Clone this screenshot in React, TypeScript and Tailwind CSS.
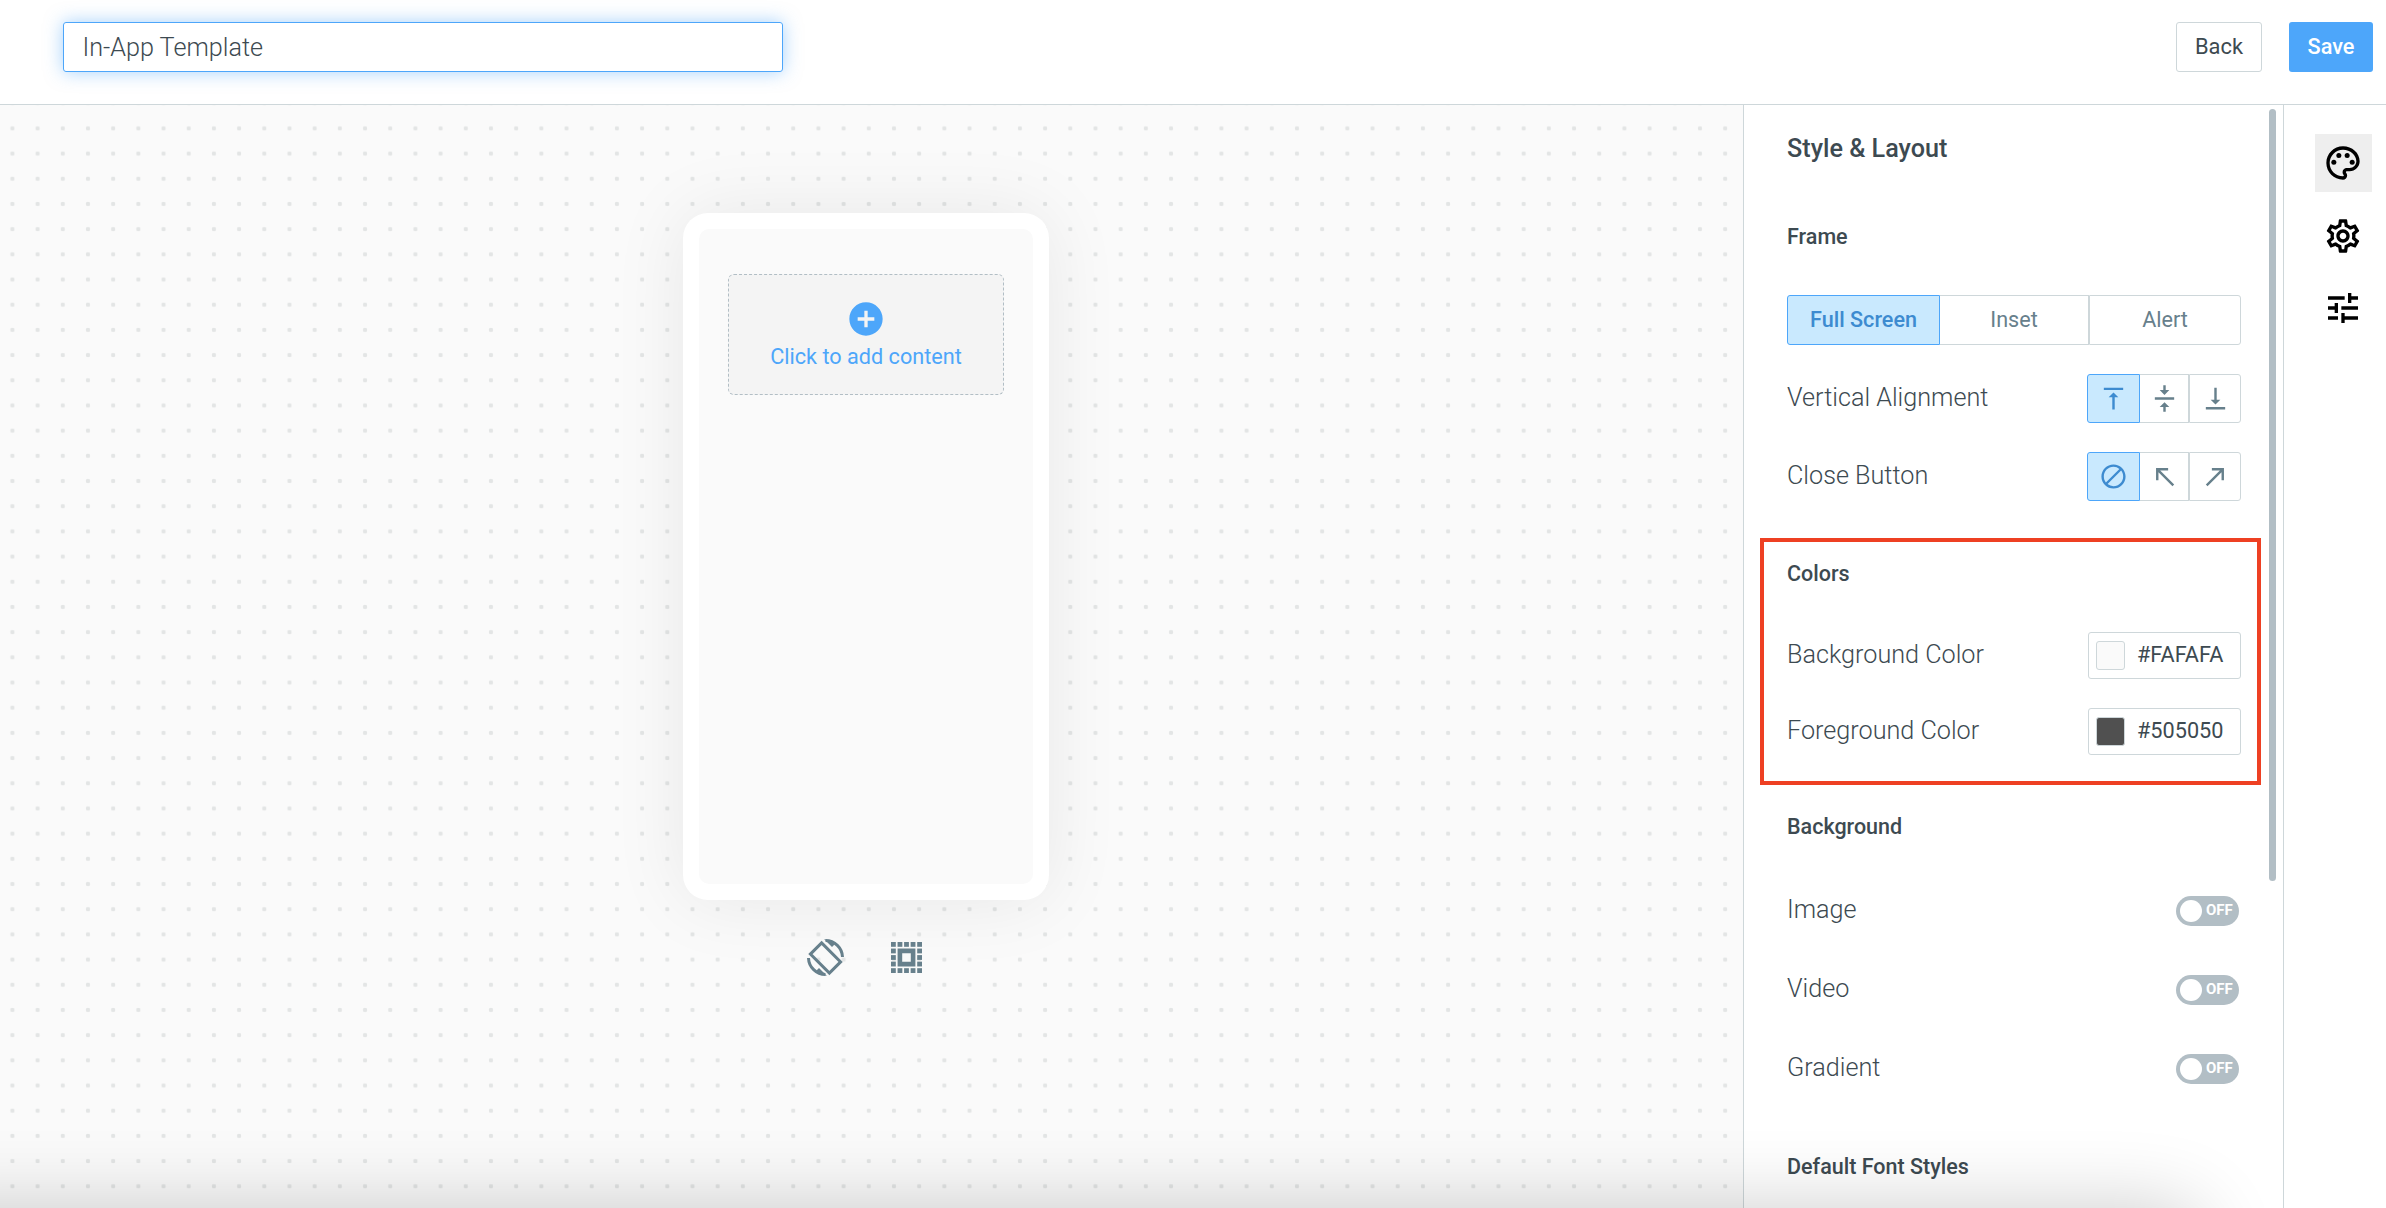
import { useState } from 'react';
import type { ReactNode } from 'react';
import {
  MdAddCircle,
  MdCallMade,
  MdNotInterested,
  MdOutlinePalette,
  MdOutlineSettings,
  MdTune,
  MdVerticalAlignBottom,
  MdVerticalAlignCenter,
  MdVerticalAlignTop,
} from 'react-icons/md';

type Segment = { id: string; label: ReactNode };

const frames: Segment[] = [
  { id: 'full', label: 'Full Screen' },
  { id: 'inset', label: 'Inset' },
  { id: 'alert', label: 'Alert' },
];

const alignments: Segment[] = [
  { id: 'top', label: <MdVerticalAlignTop className="size-[29px]" /> },
  { id: 'center', label: <MdVerticalAlignCenter className="size-[29px]" /> },
  { id: 'bottom', label: <MdVerticalAlignBottom className="size-[29px]" /> },
];

const closeButtons: Segment[] = [
  { id: 'none', label: <MdNotInterested className="size-[29px] -scale-x-100" /> },
  { id: 'left', label: <MdCallMade className="size-[29px] -scale-x-100" /> },
  { id: 'right', label: <MdCallMade className="size-[29px]" /> },
];

const backgrounds = ['Image', 'Video', 'Gradient'];

const RotateIcon = () => (
  <svg viewBox="0 0 37 37" className="size-[37px]" fill="none" stroke="currentColor" strokeWidth="3">
    <path d="M14.6 3.9 33.6 22.9 22.4 34.1 3.4 15.1z" />
    <path d="M18.5 1.5A17 17 0 0 1 35.5 18M18.5 35.5A17 17 0 0 1 1.5 19" />
    <path d="M17 0 25 8 29 4zM20 37 12 29 8 33z" fill="currentColor" stroke="none" />
  </svg>
);

const SafeAreaIcon = () => {
  const steps = [0, 6.55, 13.1, 19.65, 26.2];
  return (
    <svg viewBox="0 0 31 31" className="size-[31px]" fill="currentColor">
      {steps.map((y) =>
        steps
          .filter((x) => x === 0 || x === 26.2 || y === 0 || y === 26.2)
          .map((x) => <rect key={`${x}-${y}`} x={x} y={y} width="4.8" height="4.8" />)
      )}
      <path d="M6.6 6.6h17.8v17.8H6.6zM11.2 11.2v8.6h8.6v-8.6z" fillRule="evenodd" />
    </svg>
  );
};

const SegmentGroup = ({ items, columns, className }: { items: Segment[]; columns: string; className: string }) => {
  const [active, setActive] = useState(items[0].id);

  return (
    <div className={`grid ${columns} ${className}`}>
      {items.map((item) => (
        <button
          key={item.id}
          onClick={() => setActive(item.id)}
          className={`flex items-center justify-center border first:rounded-l-[3px] last:rounded-r-[3px] ${
            active === item.id
              ? 'border-[#4da6fa] bg-[#c9e9fe] font-medium text-[#3d8bd0]'
              : 'border-[#ced7da] border-l-0 text-[#67808c] last:border-l'
          }`}
        >
          {item.label}
        </button>
      ))}
    </div>
  );
};

const ColorField = ({ value }: { value: string }) => (
  <button className="flex h-[47px] w-[153px] items-center rounded-[3px] border border-[#ced7da] pl-[7px] text-[21.7px]">
    <span className="size-[29px] rounded-[3px] border border-[#ced7da]" style={{ backgroundColor: value }} />
    <span className="ml-[12px]">{value}</span>
  </button>
);

const Toggle = () => (
  <button className="mr-[2px] flex h-[30px] w-[63px] items-center rounded-full bg-[#b2bec5] pl-1">
    <span className="size-[22px] rounded-full bg-white" />
    <span className="ml-1 text-[15px] font-bold text-white">OFF</span>
  </button>
);

const Row = ({ label, className, children }: { label: string; className: string; children: ReactNode }) => (
  <div className={`flex items-center justify-between ${className}`}>
    <span className="pb-0.5 text-[25.2px] font-light">{label}</span>
    {children}
  </div>
);

const Heading = ({ className, children }: { className: string; children: ReactNode }) => (
  <h3 className={`text-[21.5px] leading-[26px] font-medium ${className}`}>{children}</h3>
);

const Header = () => (
  <header className="flex h-[105px] shrink-0 items-start border-b border-[#ced7da] pt-[22px] pr-[13px] pl-[63px]">
    <input
      defaultValue="In-App Template"
      className="h-[50px] w-[720px] rounded-[3px] border border-[#4da6fa] pr-5 pl-[18.5px] text-[25.2px] font-light shadow-[0_0_18px_rgba(77,166,250,0.5)] outline-none"
    />
    <button className="ml-auto h-[50px] w-[86px] rounded-[3px] border border-[#ced7da] text-[21.9px]">
      Back
    </button>
    <button className="ml-[27px] h-[50px] w-[84px] rounded-[3px] bg-[#4da6fa] text-[21.7px] font-medium text-white">
      Save
    </button>
  </header>
);

const Canvas = () => (
  <main className="flex w-[1743px] flex-col items-center bg-[#fafafa] bg-[radial-gradient(circle,#e3e5e5_1.9px,transparent_2.5px)] bg-[size:25.19px_25.19px] bg-[position:-0.2px_-14.4px] pt-[108px] pr-[11px]">
    <div className="h-[687px] w-[366px] rounded-[25px] bg-white p-4 shadow-[0_0_75px_rgba(0,0,0,0.08)]">
      <div className="h-full rounded-[10px] bg-[#fafafa] px-[29px] pt-[45px]">
        <button className="flex h-[121px] w-full flex-col items-center rounded-md border border-dashed border-[#b2bec5] bg-[#f4f4f4] pt-[24px] text-[21.65px] leading-[26px] text-[#4da6fa]">
          <MdAddCircle className="size-10" />
          <span className="mt-[5px]">Click to add content</span>
        </button>
      </div>
    </div>
    <div className="mt-[39px] mr-[3px] flex items-center gap-[47px] text-[#67808c]">
      <RotateIcon />
      <SafeAreaIcon />
    </div>
  </main>
);

const StylePanel = () => (
  <aside className="flex w-[540px] border-l border-[#ced7da]">
    <div className="w-[497px] pl-[43px]">
      <h2 className="mt-[29px] text-[25.2px] leading-[30px] font-medium">Style &amp; Layout</h2>
      <Heading className="mt-[60px]">Frame</Heading>
      <SegmentGroup
        items={frames}
        columns="grid-cols-[153px_149px_152px]"
        className="mt-[45px] h-[50px] text-[21.6px]"
      />
      <Row label="Vertical Alignment" className="mt-[29px] h-[49px]">
        <SegmentGroup items={alignments} columns="grid-cols-[53px_49px_52px]" className="h-[49px]" />
      </Row>
      <Row label="Close Button" className="mt-[29px] h-[49px]">
        <SegmentGroup items={closeButtons} columns="grid-cols-[53px_49px_52px]" className="h-[49px]" />
      </Row>
      <section className="mt-[37px] -mr-[20px] -ml-[27px] h-[247px] border-4 border-[#ee4023] pr-4 pl-[23px]">
        <Heading className="mt-[19px]">Colors</Heading>
        <Row label="Background Color" className="mt-[45px] h-[47px]">
          <ColorField value="#FAFAFA" />
        </Row>
        <Row label="Foreground Color" className="mt-[29px] h-[47px]">
          <ColorField value="#505050" />
        </Row>
      </section>
      <Heading className="mt-[29px]">Background</Heading>
      <div className="mt-[31px]">
        {backgrounds.map((name) => (
          <Row key={name} label={name} className="h-[79px]">
            <Toggle />
          </Row>
        ))}
      </div>
      <Heading className="mt-[46px]">Default Font Styles</Heading>
    </div>
    <div className="mt-1 ml-[28px] h-[772px] w-[7px] rounded-full bg-[#b2bec5]" />
  </aside>
);

const ToolRail = () => (
  <nav className="flex flex-1 flex-col items-center border-l border-[#ced7da] pt-[29px] pl-4 text-black">
    <button className="flex h-[58px] w-[57px] items-center justify-center bg-[#eee]">
      <MdOutlinePalette className="size-10" />
    </button>
    <button className="mt-[24px]">
      <MdOutlineSettings className="size-10" />
    </button>
    <button className="mt-[32px]">
      <MdTune className="size-10" />
    </button>
  </nav>
);

export default function App() {
  return (
    <div className="relative flex h-[1208px] w-[2386px] flex-col overflow-hidden bg-white font-['Roboto',sans-serif] text-[#3d4a51]">
      <Header />
      <div className="flex h-[1103px]">
        <Canvas />
        <StylePanel />
        <ToolRail />
      </div>
      <div className="pointer-events-none absolute top-full -left-[100px] h-[200px] w-[2300px] rounded-[30px] shadow-[0_0_80px_rgba(0,0,0,0.2)]" />
    </div>
  );
}
